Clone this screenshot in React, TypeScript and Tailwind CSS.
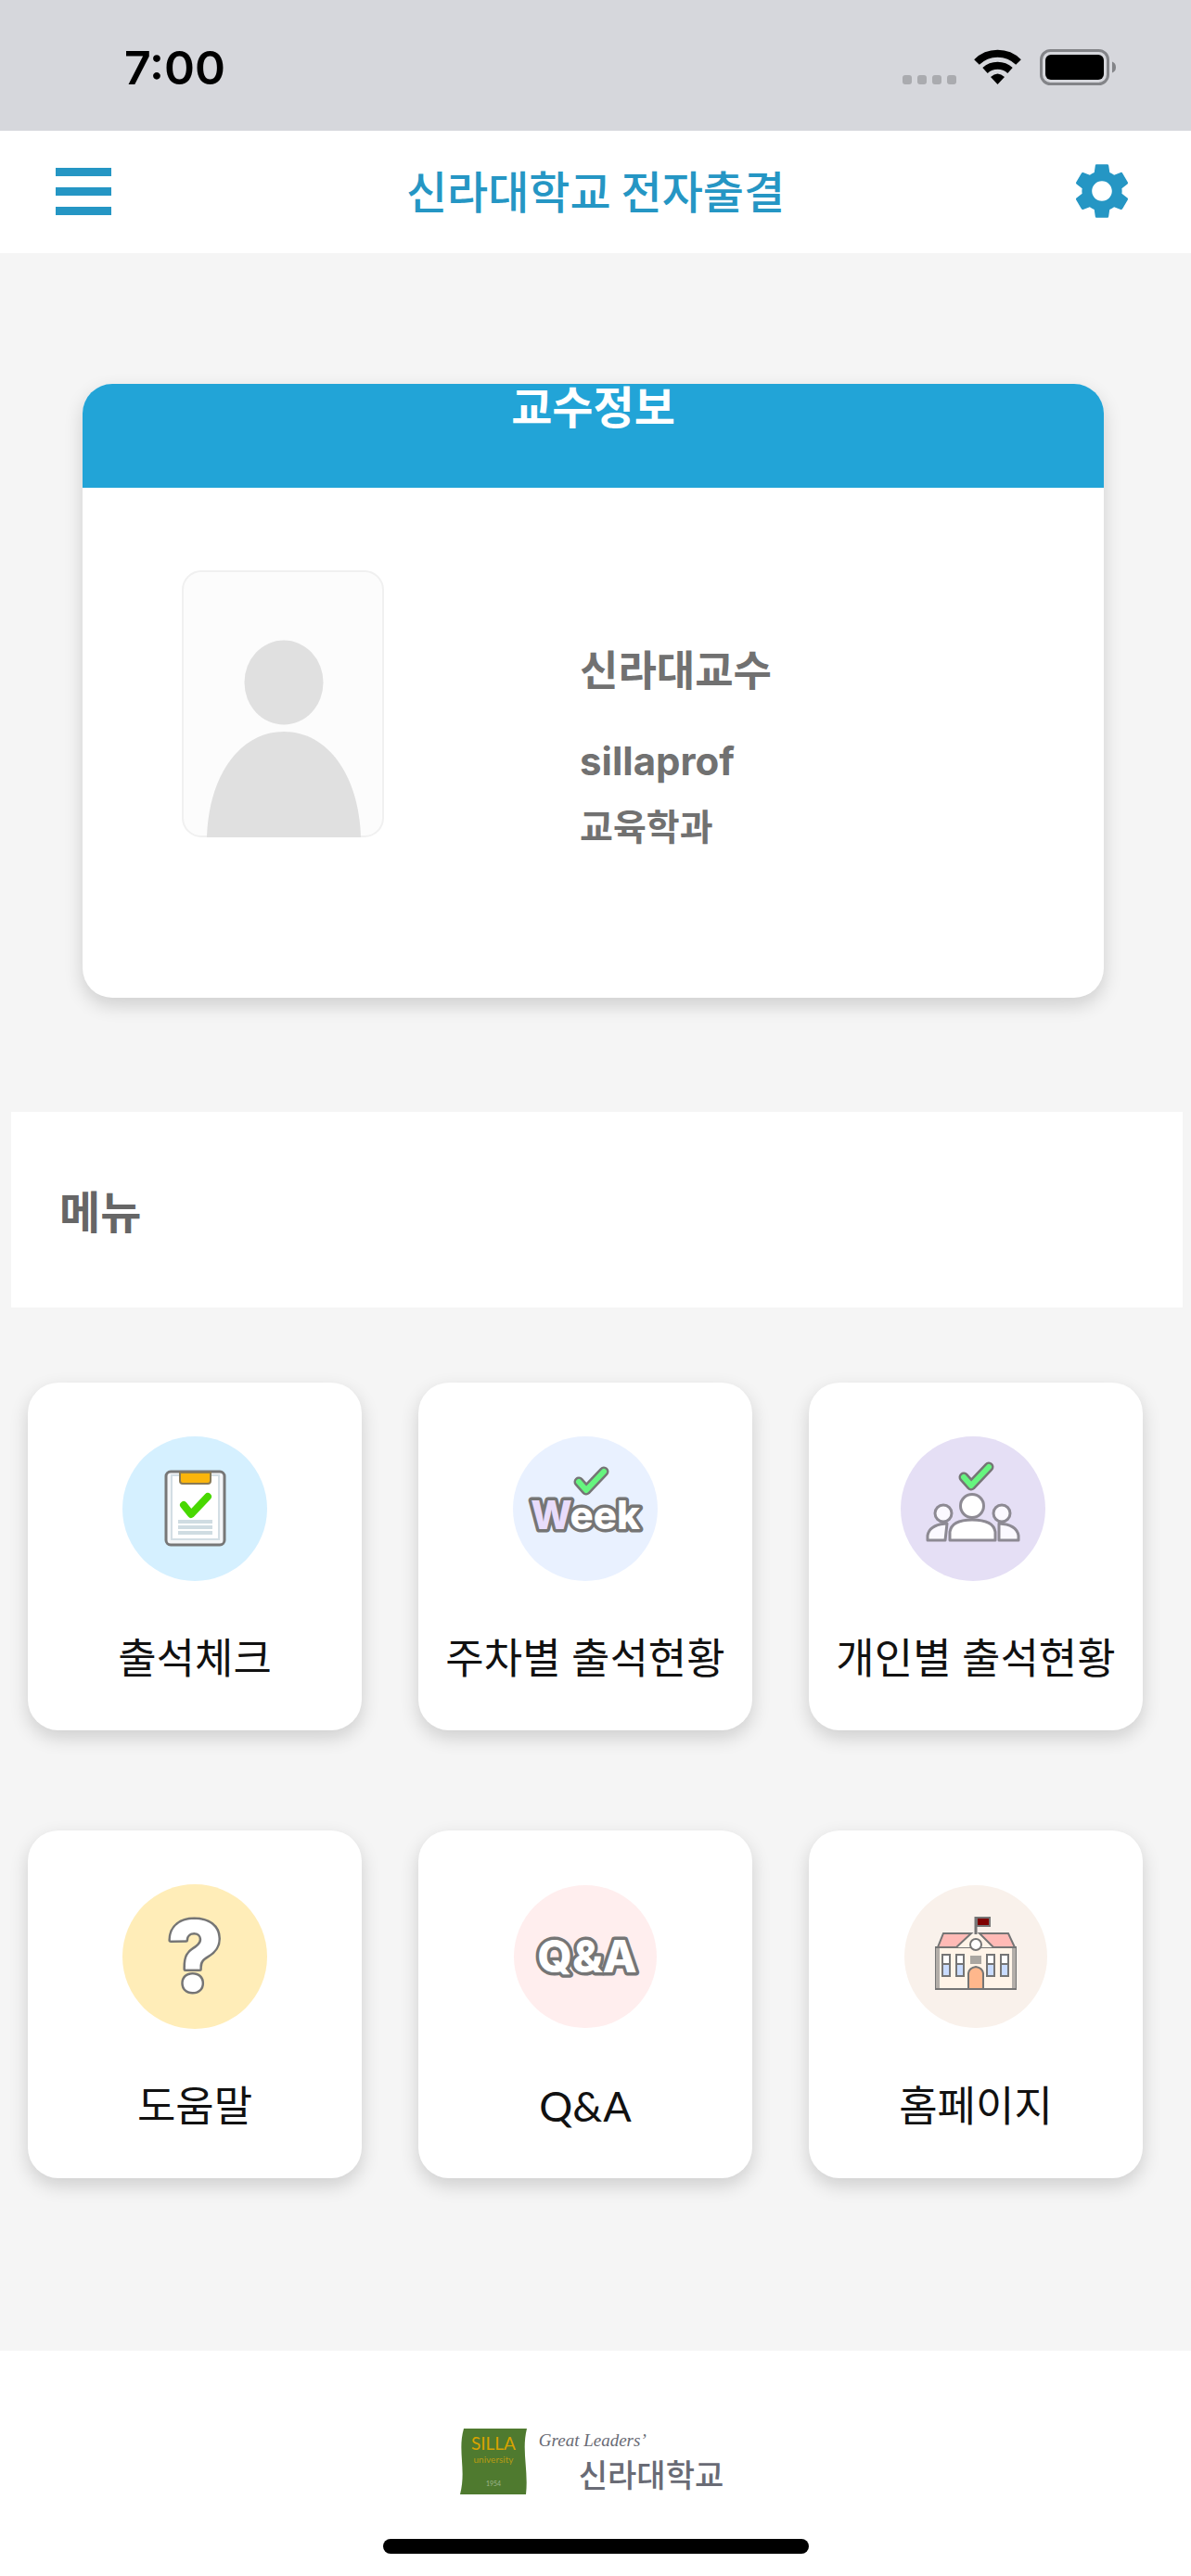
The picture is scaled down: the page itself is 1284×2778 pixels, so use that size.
import React from 'react';
import { MdSettings } from 'react-icons/md';

const OUTLINE = '#757575';

const StatusBar: React.FC = () => (
  <div className="flex h-[141px] items-center justify-between bg-[#d6d7dc] pt-1 pr-20 pl-[134px] text-black">
    <span className="font-['Inter'] text-[50px] leading-[64px] font-semibold">7:00</span>
    <div className="flex items-center gap-[19px]">
      <svg width="129" height="40" viewBox="0 0 129 40" aria-label="Wi-Fi">
        <g fill="#aaabaf">
          <rect x="0" y="28" width="10" height="10" rx="3" />
          <rect x="16" y="28" width="10" height="10" rx="3" />
          <rect x="32" y="28" width="10" height="10" rx="3" />
          <rect x="48" y="28" width="10" height="10" rx="3" />
        </g>
        <g fill="none" stroke="#000" strokeWidth="8">
          <path d="M80 14 A32 32 0 0 1 125 14" />
          <path d="M89 23 A20 20 0 0 1 116 23" />
        </g>
        <path d="M95 30 Q102.500 23 110 30 L102.500 38 Z" fill="#000" />
      </svg>
      <svg width="83" height="40" viewBox="0 0 83 40" aria-label="Battery">
        <rect x="1.500" y="1.500" width="72" height="36" rx="10" fill="none" stroke="#838488" strokeWidth="3" />
        <rect x="6" y="6" width="63" height="27" rx="6" fill="#000" />
        <path d="M78 13.500 Q82 15 82 19.500 Q82 24 78 25.500 Z" fill="#838488" />
      </svg>
    </div>
  </div>
);

const Header: React.FC = () => (
  <header className="grid h-[132px] grid-cols-[1fr_auto_1fr] items-center bg-white px-[60px] pb-0.5 text-[#2596c4]">
    <button className="flex w-[60px] flex-col gap-3 justify-self-start" aria-label="메뉴 열기">
      <span className="h-[9px] w-full bg-[#2596c4]"></span>
      <span className="h-[9px] w-full bg-[#2596c4]"></span>
      <span className="h-[9px] w-full bg-[#2596c4]"></span>
    </button>
    <h1 className="pb-1 text-[48px] leading-[64px] font-medium">신라대학교 전자출결</h1>
    <button className="justify-self-end" aria-label="설정">
      <MdSettings size={72} />
    </button>
  </header>
);

const ProfileCard: React.FC = () => (
  <section className="mt-[141px] mr-[94px] ml-[89px] rounded-[32px] bg-white shadow-[0_8px_20px_rgba(0,0,0,0.16)]">
    <h2 className="h-28 rounded-t-[32px] bg-[#22a4d7] text-center text-[48px] leading-[44px] font-semibold text-white">
      교수정보
    </h2>
    <div className="flex items-start gap-[211px] px-[107px] pt-[89px] pb-[157px] text-[#717171]">
      <svg width="218" height="288" viewBox="0 0 218 288" aria-label="프로필 사진">
        <rect x="1" y="1" width="216" height="286" rx="20" fill="#fcfcfc" stroke="#f0f0f0" strokeWidth="2" />
        <ellipse cx="110" cy="121" rx="42.500" ry="45.500" fill="#e0e0e0" />
        <path d="M27 288 C29 222 62 174 110 174 C158 174 191 222 193 288 Z" fill="#e0e0e0" />
      </svg>
      <div className="pt-[76px] font-semibold">
        <p className="text-[45px] leading-[60px]">신라대교수</p>
        <p className="mt-10 font-['Inter'] text-[42px] leading-[60px] font-bold">sillaprof</p>
        <p className="mt-2 text-[39px] leading-[60px]">교육학과</p>
      </div>
    </div>
  </section>
);

const AttendanceIcon = () => (
  <svg width="156" height="156" viewBox="0 0 156 156">
    <circle cx="78" cy="78" r="78" fill="#d5f0ff" />
    <rect x="47" y="38" width="63" height="79" rx="5" fill="#f4f6f8" stroke="#777" strokeWidth="3" />
    <rect x="53" y="42" width="51" height="69" fill="#fff" stroke="#d3dee4" strokeWidth="2" />
    <path d="M62 39 H95 V48 Q95 51 92 51 H65 Q62 51 62 48 Z" fill="#fbb50c" stroke="#8a7a55" strokeWidth="2" />
    <path d="M66 74 L74 84 L92 65" fill="none" stroke="#48d800" strokeWidth="8" strokeLinecap="round" strokeLinejoin="round" />
    <path d="M60 92 H97 M60 98 H97 M60 104 H97" stroke="#cfdce2" strokeWidth="4" />
  </svg>
);

const Check = ({ x, y }: { x: number; y: number }) => (
  <g transform={`translate(${x} ${y})`} fill="none" strokeLinecap="round" strokeLinejoin="round">
    <path d="M0 11 L8 20 L27 0" stroke={OUTLINE} strokeWidth="11" />
    <path d="M0 11 L8 20 L27 0" stroke="#66f57f" strokeWidth="6" />
  </g>
);

// white text with a grey rim, the first letter can be tinted
const BubbleText = ({ text, size, y, x = 78, rim = 7, firstColor = '#fff' }: {
  text: string; size: number; y: number; x?: number; rim?: number; firstColor?: string;
}) => (
  <text
    x={x}
    y={y}
    fontSize={size}
    textAnchor="middle"
    fill="#fff"
    stroke={OUTLINE}
    strokeWidth={rim}
    strokeLinejoin="round"
    paintOrder="stroke"
    className="font-['Inter'] font-extrabold"
  >
    <tspan fill={firstColor}>{text.slice(0, 1)}</tspan>{text.slice(1)}
  </text>
);

const WeekIcon = () => (
  <svg width="156" height="156" viewBox="0 0 156 156">
    <circle cx="78" cy="78" r="78" fill="#e9f1ff" />
    <Check x={71} y={38} />
    <BubbleText text="Week" size={42} y={100} firstColor="#e8dcfb" />
  </svg>
);

const PeopleIcon = () => (
  <svg width="156" height="156" viewBox="3 0 156 156" className="overflow-visible">
    <circle cx="78" cy="78" r="78" fill="#e5dff5" />
    <Check x={68} y={33} />
    <g fill="#fbf9ff" stroke="#8d8a93" strokeWidth="3" strokeLinejoin="round">
      <circle cx="46" cy="83" r="9" />
      <circle cx="109" cy="83" r="9" />
      <path d="M50 94 L48 112 H29 V107 Q31 95 50 94 Z" />
      <path d="M106 94 V112 H127 V107 Q125 95 106 94 Z" />
      <circle cx="77" cy="75" r="12.500" fill="#fff" />
      <path d="M53 112 V103 Q55 90 77 90 Q100 90 102 103 V112 Z" fill="#fff" />
    </g>
  </svg>
);

const HelpIcon = () => (
  <svg width="156" height="156" viewBox="0 0 156 156">
    <circle cx="78" cy="78" r="78" fill="#ffedb8" />
    <BubbleText text="?" size={104} y={115} rim={5} />
  </svg>
);

const QnaIcon = () => (
  <svg width="156" height="156" viewBox="0 0 156 156">
    <circle cx="78" cy="78" r="77" fill="#ffeeee" />
    <BubbleText text="Q&A" size={48} y={95} x={80} />
  </svg>
);

const SchoolIcon = () => (
  <svg width="156" height="156" viewBox="0 0 156 156">
    <circle cx="78" cy="78" r="77" fill="#f9f1eb" />
    <g stroke={OUTLINE} strokeWidth="2">
      <path d="M78 35 V54" strokeWidth="3" />
      <rect x="79" y="36" width="14" height="9" fill="#7e0000" />
      <rect x="35" y="68" width="86" height="45" fill="#fff4e8" />
      <path d="M57 68 L72 54 H83 L97 68 Z" fill="#fff4e8" stroke="none" />
      <path d="M43 53 H73 L57 68 H37 Z" fill="#ffbab6" />
      <path d="M82 53 H113 L120 68 H97 Z" fill="#ffbab6" />
      <path d="M37 69 V112 M119 69 V112" stroke="#b3aea9" strokeWidth="4" />
      <circle cx="78" cy="65" r="6" fill="#fff" />
      <rect x="72" y="77" width="12" height="9" fill="#aaa6a1" stroke="none" />
      <path d="M70 113 V96 Q71 90 78 89 Q85 90 86 96 V113 Z" fill="#ffb78c" />
      {[42, 57, 90, 105].map((x) => (
        <g key={x}>
          <rect x={x} y="76" width="8" height="10" fill="#fff" />
          <rect x={x} y="86" width="8" height="13" fill="#c9dcff" />
        </g>
      ))}
    </g>
  </svg>
);

const menuItems = [
  { label: '출석체크', Icon: AttendanceIcon },
  { label: '주차별 출석현황', Icon: WeekIcon },
  { label: '개인별 출석현황', Icon: PeopleIcon },
  { label: '도움말', Icon: HelpIcon },
  { label: 'Q&A', Icon: QnaIcon },
  { label: '홈페이지', Icon: SchoolIcon },
];

const MenuGrid: React.FC = () => (
  <nav className="mt-[81px] grid grid-cols-3 gap-x-[61px] gap-y-[108px] pr-[52px] pb-[185px] pl-[30px]">
    {menuItems.map(({ label, Icon }) => (
      <button
        key={label}
        className="flex flex-col items-center rounded-[33px] bg-white pt-[58px] pb-12 shadow-[0_8px_20px_rgba(0,0,0,0.16)]"
      >
        <Icon />
        <span className="mt-[53px] font-['Lato','Noto_Sans_CJK_KR',sans-serif] text-[45px] leading-[60px] whitespace-nowrap text-[#111]">
          {label}
        </span>
      </button>
    ))}
  </nav>
);

const Footer: React.FC = () => (
  <footer className="flex flex-col items-center bg-white pt-[84px] pb-6">
    <div className="flex gap-3 pr-2 text-[#696b75]">
      <svg width="73" height="71" viewBox="0 0 73 71" textAnchor="middle">
        <path d="M4 0 H72 C66 24 74 44 71 71 H0 C7 44 -3 24 4 0 Z" fill="#4f7a2f" />
        <text x="36" y="23" fontSize="19" fill="#d9a300" className="font-['Lato']">SILLA</text>
        <text x="36" y="37" fontSize="10" fill="#b89a12" className="font-['Lato']">university</text>
        <text x="36" y="62" fontSize="7" fill="#9db58b" className="font-['Lato']">1954</text>
      </svg>
      <div className="flex flex-col">
        <span className="font-['Liberation_Serif',serif] text-[19px] leading-[26px] italic">Great Leaders’</span>
        <span className="pl-[43px] text-[34px] leading-[45px] font-medium">신라대학교</span>
      </div>
    </div>
    <div className="mt-12 h-4 w-[459px] rounded-full bg-black"></div>
  </footer>
);

const App: React.FC = () => (
  <div className="flex min-h-screen flex-col bg-[#f5f5f5] font-['Noto_Sans_CJK_KR',sans-serif]">
    <StatusBar />
    <Header />
    <main className="flex-1">
      <ProfileCard />
      <h2 className="mt-[123px] mr-[9px] ml-3 bg-white px-[52px] py-[75px] text-[48px] leading-[61px] font-semibold text-[#666]">
        메뉴
      </h2>
      <MenuGrid />
    </main>
    <Footer />
  </div>
);

export default App;
